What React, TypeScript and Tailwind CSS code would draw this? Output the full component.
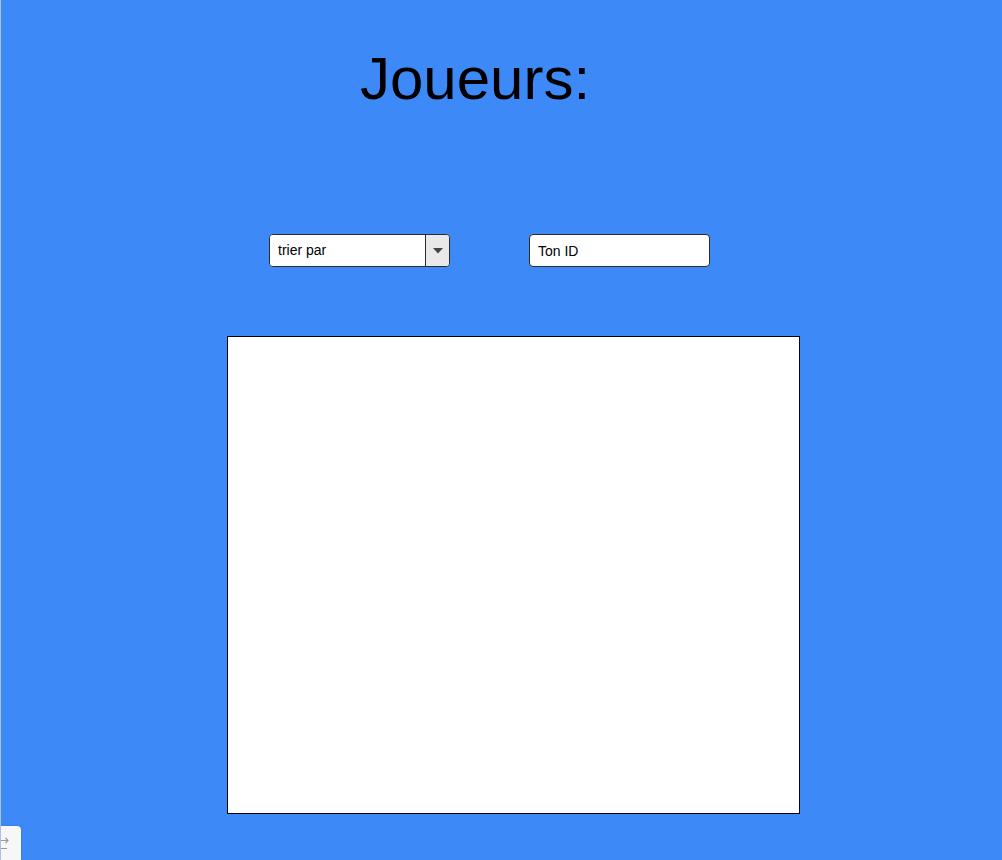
import { useState } from "react";

export default function App() {
  const [sort, setSort] = useState("");
  const [id, setId] = useState("");

  return (
    <div className="relative min-h-[860px] w-full overflow-hidden border-l border-[#a9c2e8] bg-[#3d89f8] font-['Liberation_Sans',Arial,sans-serif] text-black">
      <h1 className="pl-[359px] pt-[44px] text-[60px] leading-[69px] font-normal">
        Joueurs:
      </h1>

      <div className="mt-[121px] flex gap-[79px] pl-[268px]">
        {/* sort dropdown */}
        <div className="flex h-[33px] w-[181px] overflow-hidden rounded-[4px] border border-[#2b2b2b] bg-white">
          <select
            value={sort}
            onChange={(e) => setSort(e.target.value)}
            className="h-full flex-1 appearance-none bg-white pl-[8px] text-[14px] text-black outline-none"
          >
            <option value="">trier par</option>
            <option value="nom">nom</option>
            <option value="score">score</option>
          </select>
          <div className="flex w-[24px] items-center justify-center border-l border-[#2b2b2b] bg-[#e9e9e9]">
            <svg width="10" height="6" viewBox="0 0 10 6">
              <path d="M0 0 L10 0 L5 5.5 Z" fill="#444" />
            </svg>
          </div>
        </div>

        {/* id input */}
        <input
          value={id}
          onChange={(e) => setId(e.target.value)}
          placeholder="Ton ID"
          className="h-[33px] w-[181px] rounded-[4px] border border-[#2b2b2b] bg-white pl-[8px] text-[14px] text-black outline-none placeholder:text-black"
        />
      </div>

      <div className="mt-[69px] ml-[226px] h-[478px] w-[573px] border border-black bg-white" />

      {/* small floating tab bottom-left */}
      <div className="absolute bottom-0 left-0 flex h-[34px] w-[20px] flex-col items-start justify-center gap-[4px] rounded-tr-[4px] bg-[#f7f7f7] shadow-[0_0_2px_rgba(0,0,0,0.2)]">
        <svg width="8" height="7" viewBox="0 0 8 7">
          <path d="M0 3.5 H7 M4.5 1 L7 3.5 L4.5 6" stroke="#9a9a9a" strokeWidth="1.2" fill="none" />
        </svg>
        <div className="h-[1px] w-[6px] bg-[#9a9a9a]" />
      </div>
    </div>
  );
}
